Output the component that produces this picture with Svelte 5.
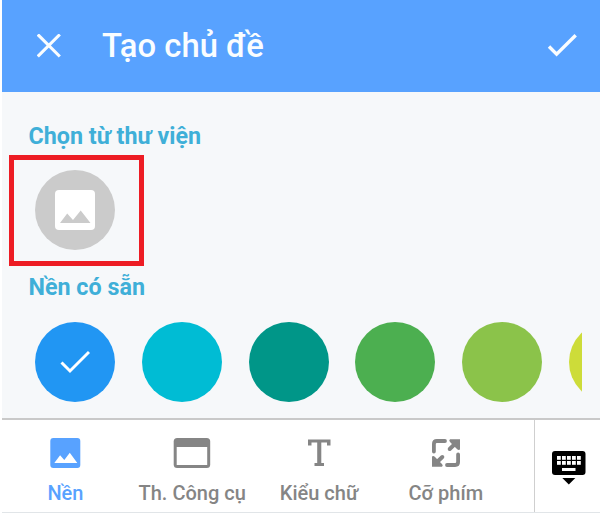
<script>
  const swatches = ['#2196f3', '#00bcd4', '#009688', '#4caf50', '#8bc34a', '#cddc39'];
</script>

<div class="app">
  <header>
    <svg class="close" width="24" height="24" viewBox="0 0 24 24"><path d="M0.800 0.500L22.800 22.500M22.800 0.500L0.800 22.500" /></svg>
    <h1>Tạo chủ đề</h1>
    <svg class="done" width="32" height="26" viewBox="0 0 32 26"><path d="M2 13.500L9.600 21.200L28.700 2.200" /></svg>
  </header>

  <main>
    <h2>Chọn từ thư viện</h2>
    <button class="gallery" aria-label="Chọn từ thư viện">
      <span class="circle">
        <svg width="40" height="40" viewBox="0 0 40 40">
          <rect width="40" height="40" rx="4" fill="#fff" />
          <path d="M5 33L12.200 23.500L18 30L25.700 20.500L35.500 33Z" fill="#cbcbcb" />
        </svg>
      </span>
    </button>
    <h2 class="second">Nền có sẵn</h2>
    <div class="swatches">
      {#each swatches as color, i}
        <span class="circle" style="background:{color}">
          {#if i === 0}
            <svg class="tick" width="30" height="24" viewBox="0 0 30 24"><path d="M1.500 12.500L10 21L29 2" /></svg>
          {/if}
        </span>
      {/each}
    </div>
  </main>

  <nav>
    <div class="tabs">
      <div class="tab active">
        <svg width="36" height="32" viewBox="0 0 36 32">
          <rect x="3.300" y="1" width="30" height="30" rx="3" fill="#58a2ff" />
          <path d="M7.300 26L13.100 18.300L17.300 23L22.800 15.700L30.300 26Z" fill="#fff" />
        </svg>
        <span>Nền</span>
      </div>
      <div class="tab">
        <svg width="38" height="32" viewBox="0 0 38 32">
          <rect x="0.700" y="1" width="36.500" height="30" rx="3.500" fill="#858585" />
          <rect x="3.700" y="10" width="30.500" height="18" fill="#fff" />
        </svg>
        <span>Th. Công cụ</span>
      </div>
      <div class="tab">
        <svg width="24" height="32" viewBox="0 0 24 32">
          <path d="M1 2.500H23.500V8.500H20V5.500H14.300V26H17V29H7.500V26H10.200V5.500H4.500V8.500H1Z" fill="#858585" />
        </svg>
        <span>Kiểu chữ</span>
      </div>
      <div class="tab">
        <svg width="30" height="32" viewBox="0 0 30 32">
          <g fill="none" stroke="#858585" stroke-width="3.800" stroke-linecap="round">
            <path d="M2.900 14.500V7Q2.900 4 5.900 4H14M27.100 17.500V25Q27.100 28 24.100 28H16" />
            <path d="M18.700 12L25.500 5.500M11.300 20L4.500 26.500" stroke-width="4" />
          </g>
          <path d="M19 2.300H29V12.500Q27.500 13.500 26 12L19 5Q17.500 3.500 19 2.300ZM11 29.700H1V19.500Q2.500 18.500 4 20L11 27Q12.500 28.500 11 29.700Z" fill="#858585" />
        </svg>
        <span>Cỡ phím</span>
      </div>
    </div>
    <div class="keyboard">
      <svg width="34" height="34" viewBox="0 0 34 34">
        <rect width="33.500" height="24" rx="3" />
        <g fill="#fff">
          {#each [5, 10, 15, 20, 25] as x}
            <rect {x} y="5" width="3.800" height="3.800" />
            <rect {x} y="10" width="3.800" height="3.800" />
          {/each}
          <rect x="10" y="17" width="13.500" height="3" />
        </g>
        <path d="M10.300 27H23.300L16.800 33.500Z" />
      </svg>
    </div>
  </nav>
</div>

<style>
  :global(body) { margin: 0; background: #fff; }
  .app { width: 598px; height: 528px; margin-left: 2px; font-family: Roboto, sans-serif; overflow: hidden; }
  header { height: 92px; background: #58a2ff; display: flex; align-items: center; box-sizing: border-box; padding: 0 21px 0 35px; }
  header path { fill: none; stroke: #fafdff; stroke-width: 3.100; }
  .done path { stroke-width: 3.400; }
  h1 { margin: 0 auto 0 41px; font-size: 32.800px; line-height: 40px; font-weight: 500; color: #fafdff; white-space: nowrap; }
  main { height: 326px; background: #f6f8fa; box-sizing: border-box; padding: 29px 18px 0 26.500px; }
  h2 { margin: 0; font-size: 23.300px; line-height: 30px; font-weight: 700; color: #3fafd8; white-space: nowrap; }
  .gallery { display: flex; box-sizing: border-box; width: 135px; height: 111px; margin: 4px 0 0 -19.500px; padding: 10px 0 0 21.300px; border: 5px solid #ed1c24; background: transparent; }
  .circle { display: flex; flex: 0 0 80px; height: 80px; border-radius: 50%; background: #cbcbcb; align-items: center; justify-content: center; }
  .second { margin-top: 6px; }
  .swatches { display: flex; gap: 26.700px; margin-top: 20px; padding-left: 6.800px; overflow: hidden; }
  .tick path { fill: none; stroke: #fff; stroke-width: 3; }
  nav { display: flex; height: 95px; box-sizing: border-box; border-top: 2px solid #c9c9c9; border-bottom: 1px solid #e1e5e8; background: #fff; }
  .tabs { width: 532px; display: flex; }
  .tab { width: 126.800px; display: flex; flex-direction: column; align-items: center; padding-top: 17px; color: #858585; font-size: 20px; font-weight: 500; white-space: nowrap; }
  .tab span { line-height: 26px; margin-top: 11px; }
  .active { color: #58a2ff; }
  .keyboard { flex: 1; border-left: 1px solid #cfcfcf; padding: 31px 0 0 17px; }
  svg { display: block; flex: none; }
</style>
